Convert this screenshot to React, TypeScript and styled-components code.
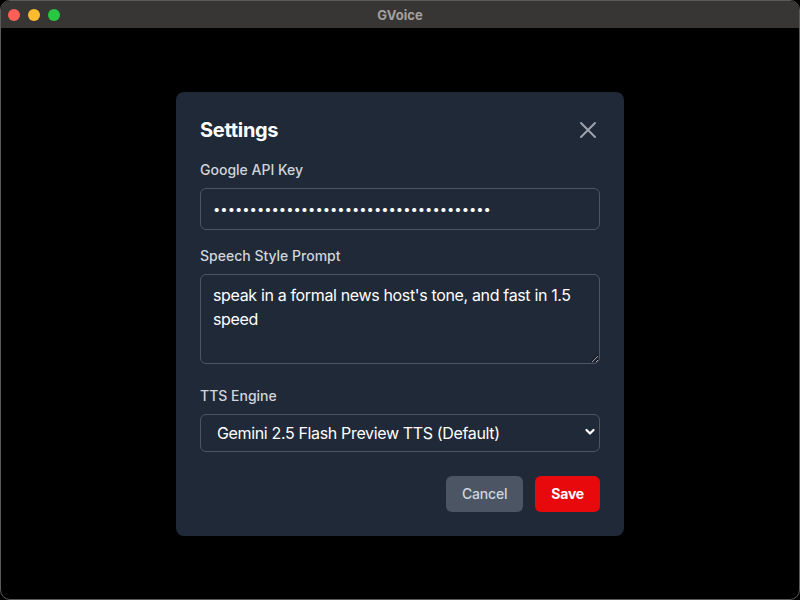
import React from "react";
import styled, { createGlobalStyle } from "styled-components";

const Global = createGlobalStyle`
  html, body { margin: 0; padding: 0; background: #000; }
  body { font-family: Inter, "Noto Sans", sans-serif; -webkit-font-smoothing: antialiased; }
  * { box-sizing: border-box; }
`;

const Window = styled.div`
  width: 800px;
  height: 600px;
  border: 1px solid #5a5a5a;
  border-radius: 10px;
  overflow: hidden;
  display: flex;
  flex-direction: column;
  background: #000;
`;

const TitleBar = styled.div`
  height: 27px;
  flex: none;
  background: #383634;
  display: flex;
  align-items: center;
  position: relative;
  padding-left: 7px;
  gap: 8px;
`;

const Light = styled.span<{ $c: string }>`
  width: 12px;
  height: 12px;
  border-radius: 50%;
  background: ${(p) => p.$c};
`;

const WinTitle = styled.div`
  position: absolute;
  left: 0;
  right: 0;
  text-align: center;
  font-size: 13px;
  font-weight: 700;
  color: #a3a19f;
  pointer-events: none;
`;

const Stage = styled.div`
  flex: 1;
  display: flex;
  align-items: center;
  justify-content: center;
`;

const Modal = styled.div`
  width: 448px;
  background: #1f2937;
  border-radius: 8px;
  padding: 24px;
  display: flex;
  flex-direction: column;
`;

const Header = styled.div`
  display: flex;
  align-items: center;
  justify-content: space-between;
  height: 28px;
  margin-bottom: 16px;
`;

const Title = styled.h2`
  margin: 0;
  font-size: 20px;
  line-height: 28px;
  font-weight: 700;
  color: #fff;
  letter-spacing: -0.3px;
`;

const CloseBtn = styled.button`
  background: none;
  border: none;
  padding: 0;
  width: 24px;
  height: 24px;
  display: flex;
  align-items: center;
  justify-content: center;
  color: #9ca3af;
  cursor: pointer;
`;

const Field = styled.div<{ $mb: number }>`
  display: flex;
  flex-direction: column;
  margin-bottom: ${(p) => p.$mb}px;
`;

const Label = styled.label`
  font-size: 14px;
  line-height: 20px;
  font-weight: 500;
  color: #d1d5db;
  margin-bottom: 8px;
`;

const controlBase = `
  width: 100%;
  background: #1f2937;
  border: 1px solid #4b5563;
  border-radius: 6px;
  color: #fff;
  font-family: Inter, "Noto Sans", sans-serif;
  font-size: 16px;
  line-height: 24px;
  letter-spacing: -0.35px;
  outline: none;
`;

const TextInput = styled.input`
  ${controlBase}
  height: 42px;
  padding: 8px 12px;
  font-size: 13px;
  letter-spacing: 0;
`;

const TextArea = styled.textarea`
  ${controlBase}
  display: block;
  height: 90px;
  padding: 8px 12px;
  resize: vertical;
`;

const SelectWrap = styled.div`
  position: relative;
`;

const Select = styled.select`
  ${controlBase}
  display: block;
  height: 38px;
  padding: 6px 16px;
  appearance: none;
  -webkit-appearance: none;
`;

const Chevron = styled.svg`
  position: absolute;
  right: 5px;
  top: 14px;
  pointer-events: none;
`;

const Actions = styled.div`
  display: flex;
  justify-content: flex-end;
  gap: 12px;
`;

const Button = styled.button<{ $primary?: boolean }>`
  height: 36px;
  padding: 0 16px;
  border: none;
  border-radius: 6px;
  font-family: Inter, "Noto Sans", sans-serif;
  font-size: 14px;
  letter-spacing: -0.2px;
  font-weight: ${(p) => (p.$primary ? 700 : 500)};
  background: ${(p) => (p.$primary ? "#e7090b" : "#4b5563")};
  color: ${(p) => (p.$primary ? "#fff" : "#d1d5db")};
  cursor: pointer;
`;

export default function App() {
  return (
    <>
      <Global />
      <Window>
        <TitleBar>
          <Light $c="#fe5f57" />
          <Light $c="#febc2e" />
          <Light $c="#28c840" />
          <WinTitle>GVoice</WinTitle>
        </TitleBar>
        <Stage>
          <Modal>
            <Header>
              <Title>Settings</Title>
              <CloseBtn aria-label="Close">
                <svg width="18" height="18" viewBox="0 0 18 18" fill="none" stroke="currentColor" strokeWidth="2" strokeLinecap="round">
                  <path d="M2 2 L16 16 M16 2 L2 16" />
                </svg>
              </CloseBtn>
            </Header>
            <Field $mb={16}>
              <Label>Google API Key</Label>
              <TextInput type="password" readOnly value={"a".repeat(38)} />
            </Field>
            <Field $mb={22}>
              <Label>Speech Style Prompt</Label>
              <TextArea readOnly value={"speak in a formal news host's tone, and fast in 1.5 speed"} />
            </Field>
            <Field $mb={24}>
              <Label>TTS Engine</Label>
              <SelectWrap>
                <Select defaultValue="g">
                  <option value="g">Gemini 2.5 Flash Preview TTS (Default)</option>
                </Select>
                <Chevron width="10" height="8" viewBox="0 0 10 8" fill="none" stroke="#fff" strokeWidth="2.2" strokeLinecap="round" strokeLinejoin="round">
                  <path d="M1.5 2 L5 5.5 L8.5 2" />
                </Chevron>
              </SelectWrap>
            </Field>
            <Actions>
              <Button>Cancel</Button>
              <Button $primary>Save</Button>
            </Actions>
          </Modal>
        </Stage>
      </Window>
    </>
  );
}
